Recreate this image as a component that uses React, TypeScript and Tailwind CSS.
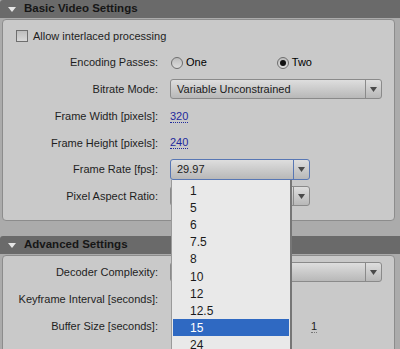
import type { ReactNode } from "react";

function Triangle() {
  return (
    <svg width="8" height="5" viewBox="0 0 8 5" className="shrink-0">
      <path d="M0 0 L8 0 L4 5 Z" fill="#e6e6e6" />
    </svg>
  );
}

function Header({ title }: { title: string }) {
  return (
    <div className="h-[18px] bg-[#6a6a6a] rounded-tl-[3px] flex items-center pl-[8px] gap-[8px]">
      <Triangle />
      <span className="font-bold text-[11.5px] text-[#161616]">{title}</span>
    </div>
  );
}

function Row({ label, children }: { label: string; children?: ReactNode }) {
  return (
    <div className="h-[26.75px] flex items-center">
      <div className="w-[155px] shrink-0 text-right text-[#1e1e1e]">{label}</div>
      <div className="ml-[12px] flex items-center flex-1">{children}</div>
    </div>
  );
}

function Select({
  value,
  width,
  focused,
}: {
  value: string;
  width: string;
  focused?: boolean;
}) {
  return (
    <div
      className={
        "flex rounded-[3px] border bg-gradient-to-b from-[#dedede] to-[#b8b8b8] " +
        width +
        (focused ? " h-[21px] border-[#5877b4]" : " h-[20px] border-[#8a8a8a]")
      }
    >
      <div className="flex-1 flex items-center pl-[6px] text-[#1a1a1a]">{value}</div>
      <div
        className={
          "w-[16px] flex items-center justify-center border-l " +
          (focused ? "border-[#5877b4]" : "border-[#8a8a8a]")
        }
      >
        <svg width="7" height="5" viewBox="0 0 7 5">
          <path d="M0 0 L7 0 L3.5 5 Z" fill="#4a4a4a" />
        </svg>
      </div>
    </div>
  );
}

function Radio({ checked }: { checked?: boolean }) {
  return (
    <div className="w-[12px] h-[12px] rounded-full border border-[#6e6e6e] bg-gradient-to-b from-[#bdbdbd] to-[#dcdcdc] flex items-center justify-center">
      {checked && <div className="w-[6px] h-[6px] rounded-full bg-[#111]" />}
    </div>
  );
}

function LinkValue({ v }: { v: string }) {
  return (
    <span className="text-[#1f2a9c] border-b border-dotted border-[#1f2a9c] leading-[12px]">
      {v}
    </span>
  );
}

const rates = ["1", "5", "6", "7.5", "8", "10", "12", "12.5", "15", "24"];

export default function App() {
  return (
    <div className="relative w-[400px] h-[349px] overflow-hidden bg-[#ababab] text-[11px] font-['Liberation_Sans',Arial,sans-serif]">
      <Header title="Basic Video Settings" />
      <div className="mt-[1px] ml-[2px] w-[393px] h-[202px] rounded-[4px] border border-[#8c8c8c] bg-[#c9c9c9] pt-[2.5px]">
        <div className="h-[26.75px] flex items-center pl-[13px] gap-[5px]">
          <div className="w-[12px] h-[12px] border border-[#6e6e6e] bg-gradient-to-b from-[#bdbdbd] to-[#d8d8d8]" />
          <span className="text-[#1e1e1e]">Allow interlaced processing</span>
        </div>
        <Row label="Encoding Passes:">
          <div className="ml-[1px] flex items-center gap-[3px]">
            <Radio />
            <span>One</span>
          </div>
          <div className="ml-[70px] flex items-center gap-[3px]">
            <Radio checked />
            <span>Two</span>
          </div>
        </Row>
        <Row label="Bitrate Mode:">
          <Select value="Variable Unconstrained" width="w-[212px]" />
        </Row>
        <Row label="Frame Width [pixels]:">
          <LinkValue v="320" />
        </Row>
        <Row label="Frame Height [pixels]:">
          <LinkValue v="240" />
        </Row>
        <Row label="Frame Rate [fps]:">
          <Select value="29.97" width="w-[140px]" focused />
        </Row>
        <Row label="Pixel Aspect Ratio:">
          <Select value="" width="w-[140px]" />
        </Row>
      </div>

      <div className="mt-[15px]">
        <Header title="Advanced Settings" />
        <div className="mt-[1px] ml-[2px] w-[393px] h-[120px] rounded-[4px] border border-[#8c8c8c] bg-[#c9c9c9] pt-[2.5px]">
          <div className="h-[27px] flex items-center">
            <div className="w-[155px] shrink-0 text-right text-[#1e1e1e]">Decoder Complexity:</div>
            <div className="ml-[12px]">
              <Select value="" width="w-[212px]" />
            </div>
          </div>
          <div className="h-[27px] flex items-center">
            <div className="w-[155px] shrink-0 text-right text-[#1e1e1e]">
              Keyframe Interval [seconds]:
            </div>
          </div>
          <div className="h-[27px] flex items-center">
            <div className="w-[155px] shrink-0 text-right text-[#1e1e1e]">Buffer Size [seconds]:</div>
            <div className="ml-[153px]">
              <span className="text-[#1e1e1e] border-b border-dotted border-[#777] leading-[12px]">1</span>
            </div>
          </div>
          <div className="h-[27px] flex items-center">
            <div className="w-[155px] shrink-0 text-right text-[#1e1e1e]">
              Average Video Bitrate [kbps]:
            </div>
            <div className="ml-[142px]">
              <LinkValue v="800.00" />
            </div>
          </div>
        </div>
      </div>

      <div className="absolute left-[171px] top-[180px] w-[121px] h-[180px] bg-[#e9e9e9] border-l border-[#9a9a9a] border-r-2 border-r-[#767676] pt-[2.5px]">
        {rates.map((r) => (
          <div
            key={r}
            className={
              "h-[17.1px] mx-[1px] flex items-center pl-[17px] text-[12px] " +
              (r === "15" ? "bg-[#2f69c2] text-white" : "text-[#1a1a1a]")
            }
          >
            {r}
          </div>
        ))}
      </div>
    </div>
  );
}
